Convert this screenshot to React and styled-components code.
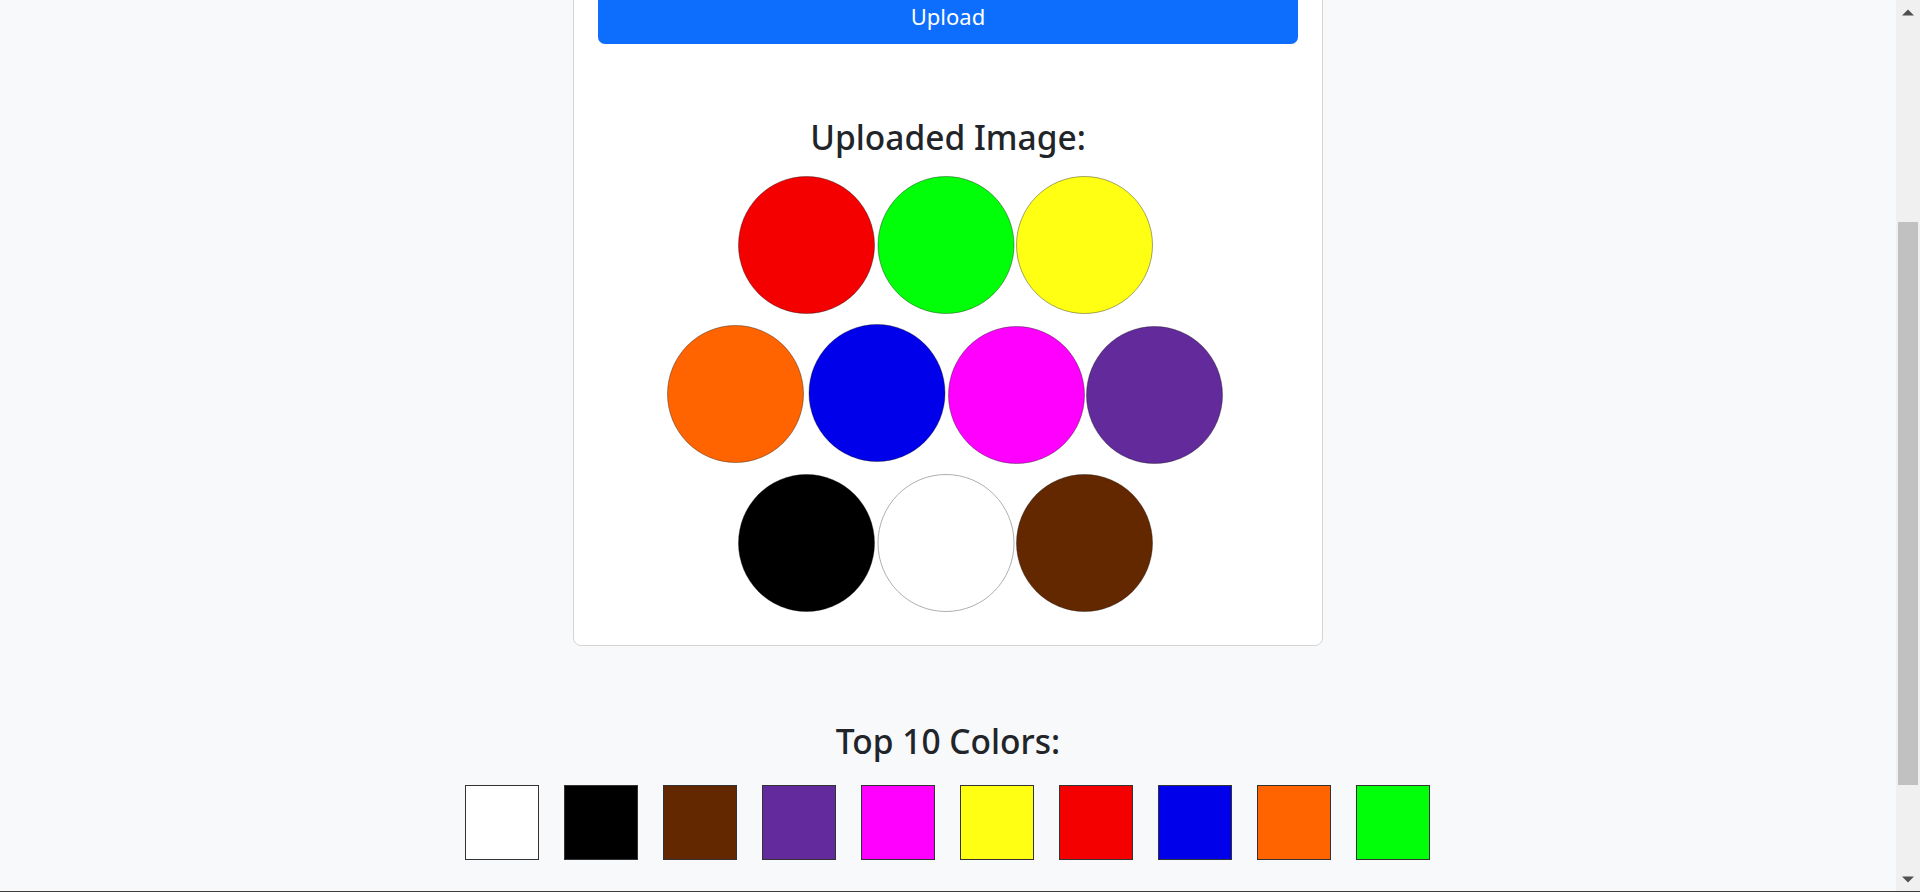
import React from "react";
import styled, { createGlobalStyle } from "styled-components";

const GlobalStyle = createGlobalStyle`
  html, body {
    margin: 0;
    padding: 0;
    background: #f8f9fa;
    font-family: "Noto Sans", "Open Sans", sans-serif;
    color: #212529;
  }
  * { box-sizing: border-box; }
`;

const Frame = styled.div`
  display: flex;
  height: 100vh;
  overflow: hidden;
  border-bottom: 1px solid #3c3c3c;
`;

const Viewport = styled.main`
  flex: 1;
  min-width: 0;
  display: flex;
  flex-direction: column;
  justify-content: flex-end;
  align-items: center;
  overflow: hidden;
  padding-bottom: 31px;
`;

const Card = styled.section`
  width: 750px;
  flex-shrink: 0;
  background: #ffffff;
  border: 1px solid #d3d4d5;
  border-radius: 8px;
  padding: 24px;
  display: flex;
  flex-direction: column;
  align-items: center;
`;

const UploadButton = styled.button`
  width: 100%;
  height: 54px;
  border: none;
  border-radius: 7px;
  background: #0d6efd;
  color: #ffffff;
  font-family: inherit;
  font-size: 22px;
  line-height: 1;
  padding: 0 0 3px;
  cursor: pointer;
`;

const Heading = styled.h3`
  margin: ${(p) => p.$top}px 0 ${(p) => p.$bottom}px;
  font-size: 33.5px;
  font-weight: 500;
  line-height: 42px;
  text-align: center;
`;

const ImageCanvas = styled.svg`
  display: block;
  width: 600px;
  height: 455px;
`;

const Palette = styled.div`
  display: flex;
  gap: 25px;
  margin-left: -1px;
`;

const Swatch = styled.div`
  width: 74px;
  height: 75px;
  border: 1px solid #333333;
  background: ${(p) => p.$color};
`;

const Scrollbar = styled.div`
  width: 24px;
  flex-shrink: 0;
  background: #f0f0f0;
  display: flex;
  flex-direction: column;
`;

const ArrowButton = styled.div`
  height: 24px;
  flex-shrink: 0;
  display: flex;
  align-items: center;
  justify-content: center;
`;

const Track = styled.div`
  flex: 1;
  display: flex;
  flex-direction: column;
  padding: 0 2px;
`;

const Thumb = styled.div`
  background: #c1c1c1;
  margin-top: ${(p) => p.$offset}px;
  height: ${(p) => p.$size}px;
`;

const circles = [
  { cx: 158.5, cy: 79, fill: "#f40000" },
  { cx: 298, cy: 79, fill: "#00ff08" },
  { cx: 436.5, cy: 79, fill: "#ffff14" },
  { cx: 87.5, cy: 228, fill: "#ff6400" },
  { cx: 229, cy: 227, fill: "#0000ea" },
  { cx: 368.5, cy: 229, fill: "#ff00fe" },
  { cx: 506.5, cy: 229, fill: "#632a9c" },
  { cx: 158.5, cy: 377, fill: "#000000" },
  { cx: 298, cy: 377, fill: "#ffffff", stroke: "#9a9a9a" },
  { cx: 436.5, cy: 377, fill: "#642800" },
];

const topColors = [
  "#ffffff",
  "#000000",
  "#642800",
  "#632a9d",
  "#ff00fe",
  "#ffff14",
  "#f40000",
  "#0000ea",
  "#ff6400",
  "#00ff08",
];

function Arrow({ up }) {
  return (
    <svg width="12" height="7" viewBox="0 0 12 7">
      <polygon
        points={up ? "0,6.5 6,0.5 12,6.5" : "0,0.5 6,6.5 12,0.5"}
        fill="#505050"
      />
    </svg>
  );
}

export default function App() {
  return (
    <>
      <GlobalStyle />
      <Frame>
        <Viewport>
          <Card>
            <UploadButton>Upload</UploadButton>
            <Heading $top={72} $bottom={8}>
              Uploaded Image:
            </Heading>
            <ImageCanvas viewBox="0 0 600 455">
              <rect width="600" height="455" fill="#ffffff" />
              {circles.map((c, i) => (
                <ellipse
                  key={i}
                  cx={c.cx}
                  cy={c.cy}
                  rx="68"
                  ry="68.5"
                  fill={c.fill}
                  stroke={c.stroke || "rgba(0,0,0,0.45)"}
                  strokeWidth="0.8"
                />
              ))}
            </ImageCanvas>
          </Card>
          <Heading $top={74} $bottom={23}>
            Top 10 Colors:
          </Heading>
          <Palette>
            {topColors.map((c, i) => (
              <Swatch key={i} $color={c} />
            ))}
          </Palette>
        </Viewport>
        <Scrollbar>
          <ArrowButton>
            <Arrow up />
          </ArrowButton>
          <Track>
            <Thumb $offset={198} $size={563} />
          </Track>
          <ArrowButton>
            <Arrow />
          </ArrowButton>
        </Scrollbar>
      </Frame>
    </>
  );
}
